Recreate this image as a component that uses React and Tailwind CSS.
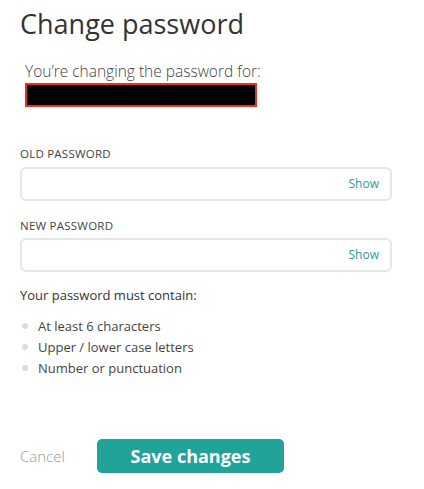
import React, { useState } from "react";

const PasswordField = ({ label, value, onChange }) => {
  const [visible, setVisible] = useState(false);
  return (
    <div>
      <label className="block text-[11.5px] text-[#444] tracking-[0.02em] leading-none">
        {label}
      </label>
      <div className="mt-[7px] flex items-center h-[34px] w-[372px] rounded-[6px] border-2 border-[#e6e6e6] bg-white pl-3 pr-[11px]">
        <input
          type={visible ? "text" : "password"}
          value={value}
          onChange={(e) => onChange(e.target.value)}
          className="flex-grow min-w-0 bg-transparent text-[13px] text-[#333] outline-none"
        />
        <button
          className="text-[12px] text-[#2a9d9b] leading-none"
          onClick={() => setVisible(!visible)}
        >
          {visible ? "Hide" : "Show"}
        </button>
      </div>
    </div>
  );
};

const App = () => {
  const [oldPassword, setOldPassword] = useState("");
  const [newPassword, setNewPassword] = useState("");

  const rules = [
    "At least 6 characters",
    "Upper / lower case letters",
    "Number or punctuation",
  ];

  return (
    <div
      className="w-[424px] h-[489px] bg-white text-[#333] px-5 pt-[6px]"
      style={{ fontFamily: "'Open Sans', 'Noto Sans', sans-serif" }}
    >
      <h1 className="text-[27px] leading-[36px] font-normal text-[#333]">
        Change password
      </h1>
      <div className="mt-[19px] pl-[5px]">
        <p className="text-[15.5px] leading-[20px] font-light text-[#444]">
          You’re changing the password for:
        </p>
        <div className="mt-[2px] w-[232px] h-[24px] bg-black border-2 border-[#f0321a]" />
      </div>

      <div className="mt-[41px] flex flex-col gap-[19px]">
        <PasswordField
          label="OLD PASSWORD"
          value={oldPassword}
          onChange={setOldPassword}
        />
        <PasswordField
          label="NEW PASSWORD"
          value={newPassword}
          onChange={setNewPassword}
        />
      </div>

      <p className="mt-[15px] text-[13px] leading-[16px] text-[#333]">
        Your password must contain:
      </p>
      <ul className="mt-[15px] flex flex-col gap-[5px]">
        {rules.map((rule) => (
          <li key={rule} className="flex items-center text-[13px] leading-[16px] text-[#444]">
            <span className="ml-[2px] mr-[10px] w-[6px] h-[6px] rounded-full bg-[#dcdcdc]" />
            {rule}
          </li>
        ))}
      </ul>

      <div className="mt-[63px] flex items-center">
        <button className="text-[15px] font-light text-[#999] w-[77px] text-left">
          Cancel
        </button>
        <button className="w-[187px] h-[34px] rounded-[5px] bg-[#21a39a] text-white text-[18px] font-bold">
          Save changes
        </button>
      </div>
    </div>
  );
};

export default App;
